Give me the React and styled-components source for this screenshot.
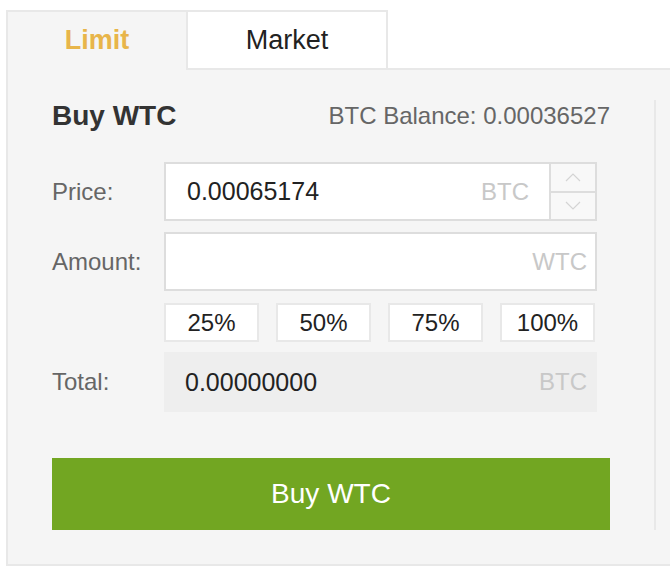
import React from 'react';
import styled, { createGlobalStyle } from 'styled-components';

const GlobalStyle = createGlobalStyle`
  html, body {
    margin: 0;
    padding: 0;
    background: #ffffff;
    overflow: hidden;
  }
  body {
    font-family: "Liberation Sans", Arial, Helvetica, sans-serif;
  }
`;

const Page = styled.div`
  padding: 10px 0 0 6px;
`;

const Panel = styled.div`
  display: flex;
  flex-direction: column;
`;

const TabBar = styled.div`
  display: flex;
  height: 58px;
  border-bottom: 2px solid #e8e8e8;
`;

const Tab = styled.div`
  box-sizing: border-box;
  display: flex;
  align-items: center;
  justify-content: center;
  width: ${(p) => p.width}px;
  height: ${(p) => (p.active ? 60 : 58)}px;
  margin-bottom: ${(p) => (p.active ? -2 : 0)}px;
  border-top: 2px solid #e8e8e8;
  border-left: 2px solid #e8e8e8;
  border-right: ${(p) => (p.last ? '2px solid #e8e8e8' : 'none')};
  background: ${(p) => (p.active ? '#f5f5f5' : '#ffffff')};
  color: ${(p) => (p.active ? '#e8b54a' : '#222222')};
  font-size: 27px;
  font-weight: ${(p) => (p.active ? 700 : 400)};
  padding-bottom: ${(p) => (p.active ? 2 : 0)}px;
`;

const Body = styled.div`
  background: #f5f5f5;
  border-left: 2px solid #e8e8e8;
  border-bottom: 2px solid #e8e8e8;
  padding: 30px 0 34px 44px;
`;

const Form = styled.div`
  width: 558px;
  padding-right: 44px;
  border-right: 2px solid #e8e8e8;
  display: flex;
  flex-direction: column;
`;

const Header = styled.div`
  display: flex;
  align-items: center;
  justify-content: space-between;
  height: 31px;
`;

const Title = styled.div`
  font-size: 28px;
  font-weight: 700;
  color: #333333;
`;

const Balance = styled.div`
  font-size: 24px;
  color: #666666;
`;

const Row = styled.div`
  display: flex;
  align-items: center;
  padding-right: 13px;
  margin-top: ${(p) => p.top}px;
`;

const Label = styled.div`
  width: 112px;
  flex-shrink: 0;
  font-size: 24px;
  color: #666666;
`;

const InputBox = styled.div`
  box-sizing: border-box;
  flex: 1;
  display: flex;
  height: 59px;
  border: 2px solid #dddddd;
  background: #ffffff;
`;

const Field = styled.div`
  flex: 1;
  display: flex;
  align-items: center;
  justify-content: space-between;
  padding: 0 ${(p) => p.padRight}px 0 21px;
  background: ${(p) => (p.muted ? '#eeeeee' : '#ffffff')};
`;

const Value = styled.span`
  font-size: 25px;
  color: #222222;
`;

const Unit = styled.span`
  font-size: 24px;
  color: #c8c8c8;
`;

const Spinner = styled.div`
  width: 44px;
  display: flex;
  flex-direction: column;
  border-left: 2px solid #dddddd;
  background: #f8f8f8;
`;

const SpinButton = styled.div`
  flex: 1;
  display: flex;
  align-items: center;
  justify-content: center;
  border-top: ${(p) => (p.lower ? '2px solid #dddddd' : 'none')};
`;

const TotalBox = styled.div`
  flex: 1;
  display: flex;
  height: 60px;
`;

const PercentGrid = styled.div`
  flex: 1;
  display: grid;
  grid-template-columns: repeat(4, 1fr);
  gap: 17px;
  padding-right: 2px;
`;

const PercentButton = styled.div`
  box-sizing: border-box;
  height: 39px;
  display: flex;
  align-items: center;
  justify-content: center;
  border: 2px solid #e8e8e8;
  background: #ffffff;
  font-size: 24px;
  color: #222222;
`;

const BuyButton = styled.div`
  margin-top: 46px;
  height: 72px;
  display: flex;
  align-items: center;
  justify-content: center;
  background: #72a622;
  color: #ffffff;
  font-size: 28px;
`;

const Chevron = ({ up }) => (
  <svg width="16" height="9" viewBox="0 0 16 9">
    <polyline
      points={up ? '1,8 8,1 15,8' : '1,1 8,8 15,1'}
      fill="none"
      stroke="#d4d4d4"
      strokeWidth="1.2"
    />
  </svg>
);

const percents = ['25%', '50%', '75%', '100%'];

const App = () => (
  <React.Fragment>
    <GlobalStyle />
    <Page>
      <Panel>
        <TabBar>
          <Tab active width={180}>Limit</Tab>
          <Tab last width={202}>Market</Tab>
        </TabBar>
        <Body>
          <Form>
            <Header>
              <Title>Buy WTC</Title>
              <Balance>BTC Balance: 0.00036527</Balance>
            </Header>

            <Row top={31}>
              <Label>Price:</Label>
              <InputBox>
                <Field padRight={20}>
                  <Value>0.00065174</Value>
                  <Unit>BTC</Unit>
                </Field>
                <Spinner>
                  <SpinButton>
                    <Chevron up />
                  </SpinButton>
                  <SpinButton lower>
                    <Chevron />
                  </SpinButton>
                </Spinner>
              </InputBox>
            </Row>

            <Row top={11}>
              <Label>Amount:</Label>
              <InputBox>
                <Field padRight={8}>
                  <Value />
                  <Unit>WTC</Unit>
                </Field>
              </InputBox>
            </Row>

            <Row top={12}>
              <Label />
              <PercentGrid>
                {percents.map((p) => (
                  <PercentButton key={p}>{p}</PercentButton>
                ))}
              </PercentGrid>
            </Row>

            <Row top={10}>
              <Label>Total:</Label>
              <TotalBox>
                <Field muted padRight={10}>
                  <Value>0.00000000</Value>
                  <Unit>BTC</Unit>
                </Field>
              </TotalBox>
            </Row>

            <BuyButton>Buy WTC</BuyButton>
          </Form>
        </Body>
      </Panel>
    </Page>
  </React.Fragment>
);

export default App;
